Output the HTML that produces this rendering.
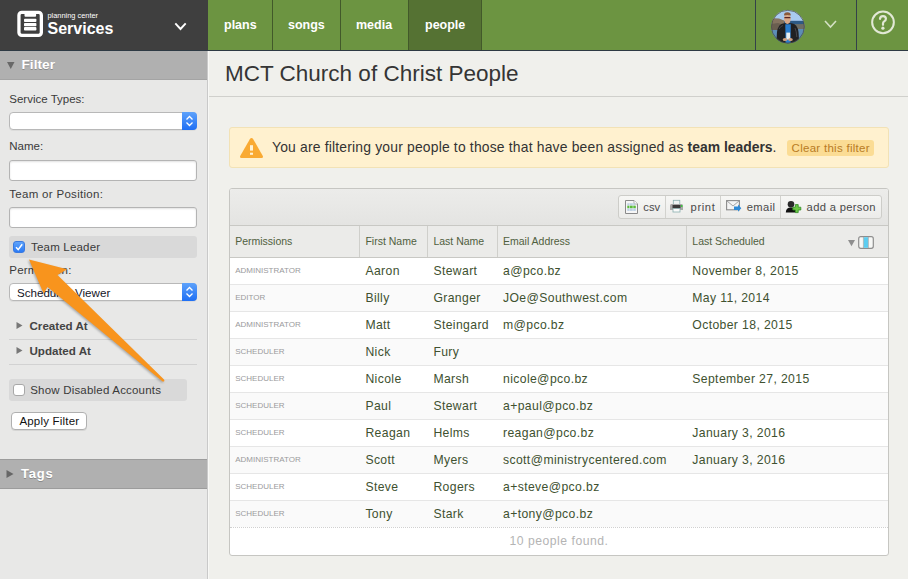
<!DOCTYPE html>
<html><head><meta charset="utf-8"><style>
*{margin:0;padding:0;box-sizing:border-box}
html,body{width:908px;height:579px;overflow:hidden;background:#f0f0ec;font-family:"Liberation Sans",sans-serif;position:relative}
.t{position:absolute;white-space:nowrap;line-height:1}
.b{position:absolute}
</style></head><body>
<div class="b" style="left:0;top:0;width:208px;height:50px;background:#3f3f3f"></div>
<div class="b" style="left:208px;top:0;width:700px;height:50px;background:#6c9441"></div>
<div class="b" style="left:0;top:50px;width:908px;height:1px;background:#2e3a44"></div>
<div class="b" style="left:409px;top:0;width:72px;height:50px;background:#557233"></div>
<div class="b" style="left:272px;top:0;width:1px;height:50px;background:#42592a"></div>
<div class="b" style="left:340px;top:0;width:1px;height:50px;background:#42592a"></div>
<div class="b" style="left:408px;top:0;width:1px;height:50px;background:#42592a"></div>
<div class="b" style="left:481px;top:0;width:1px;height:50px;background:#42592a"></div>
<div class="b" style="left:755px;top:0;width:1px;height:50px;background:#34414a"></div>
<div class="b" style="left:856px;top:0;width:1px;height:50px;background:#34414a"></div>
<div class="t" style="left:224px;top:19.42px;font-size:12.5px;color:#fff;font-weight:700;">plans</div>

<div class="t" style="left:288px;top:19.42px;font-size:12.5px;color:#fff;font-weight:700;">songs</div>

<div class="t" style="left:356px;top:19.42px;font-size:12.5px;color:#fff;font-weight:700;">media</div>

<div class="t" style="left:425px;top:19.42px;font-size:12.5px;color:#fff;font-weight:700;">people</div>

<svg class="b" style="left:14px;top:8px" width="32" height="32" viewBox="0 0 32 32">
<rect x="4.95" y="4.45" width="22.4" height="22.9" rx="2.8" fill="none" stroke="#fff" stroke-width="3.3"/>
<path d="M10.5 5 L22.1 5 L22.1 7.8 Q22.1 8.8 21.1 8.8 L11.5 8.8 Q10.5 8.8 10.5 7.8Z" fill="#fff"/>
<rect x="10" y="10.8" width="12.4" height="3.3" rx="0.8" fill="#fff"/>
<rect x="10" y="15" width="12.4" height="3.2" rx="0.8" fill="#fff"/>
<rect x="10" y="19.1" width="12.4" height="3.5" rx="0.8" fill="#fff"/>
</svg>
<div class="t" style="left:47.5px;top:12.03px;font-size:7.4px;color:#fff;font-weight:400;">planning center</div>

<div class="t" style="left:47.5px;top:20.65px;font-size:16px;color:#fff;font-weight:700;">Services</div>

<svg class="b" style="left:173px;top:21px" width="15" height="11" viewBox="0 0 15 11"><path d="M2.3 2.3 L7.5 8 L12.7 2.3" fill="none" stroke="#fff" stroke-width="1.9"/></svg>
<svg class="b" style="left:768px;top:7px" width="40" height="40" viewBox="0 0 40 40">
<defs><clipPath id="c"><circle cx="19.9" cy="19.7" r="16.6"/></clipPath></defs>
<g clip-path="url(#c)">
<rect width="40" height="40" fill="#a9cbf0"/>
<rect y="13.8" width="40" height="27" fill="#2d5a86"/>
<rect y="22" width="40" height="18" fill="#5d8db6"/>
<path d="M2 12.5 L6 11.2 L11 11.4 L16 13.5 L16 23 L2 23Z" fill="#85735f"/>
<path d="M2 17 L10 16 L16 18 L16 23 L2 23Z" fill="#6a5e50"/>
<path d="M23 17.3 L37 17 L37 22 L23 22Z" fill="#6e6e66"/>
<path d="M8 40 L9 25 Q10 17 16 16.2 L23.5 16.2 Q29.5 17 30.5 25 L31.5 40Z" fill="#202022"/>
<path d="M11 22 Q12.5 19 15 18.5 M27 21 Q28.5 24 28.8 30" fill="none" stroke="#4a4a4e" stroke-width="0.9"/>
<path d="M17.3 17.3 L22.8 17.3 L22.6 36 L17.5 36Z" fill="#2a7ccc"/>
<ellipse cx="19.4" cy="12" rx="3.3" ry="4.9" fill="#d9a888"/>
<path d="M16 8.6 Q15.9 5.3 19.4 5.3 Q22.9 5.3 22.8 8.6 Q19.4 7.2 16 8.6Z" fill="#8a5a3c"/>
<rect x="16.3" y="9.9" width="6.2" height="1.3" rx="0.5" fill="#5a2626"/>
<rect x="18.3" y="25.6" width="3.8" height="6.9" fill="#e8eef0"/>
<ellipse cx="17" cy="32.5" rx="2.3" ry="1.6" fill="#cfa080"/>
<ellipse cx="22.5" cy="32.5" rx="2.3" ry="1.6" fill="#cfa080"/>
</g>
<circle cx="19.9" cy="19.7" r="16.4" fill="none" stroke="#4a4a44" stroke-width="0.7"/>
</svg>
<svg class="b" style="left:824px;top:19px" width="13" height="10" viewBox="0 0 13 10"><path d="M1 2 L6.5 8 L12 2" fill="none" stroke="#d4e0c4" stroke-width="1.6"/></svg>
<svg class="b" style="left:868px;top:8px" width="30" height="30" viewBox="0 0 30 30"><circle cx="15" cy="14.35" r="10.85" fill="none" stroke="#e2e8d6" stroke-width="2"/><path d="M12 10.9 Q12.1 8.1 15 8.1 Q17.9 8.1 17.9 10.8 Q17.9 12.4 16.2 13.4 Q15 14.2 15 15.6 L 15 16.8" fill="none" stroke="#e2e8d6" stroke-width="2.2" stroke-linecap="round"/><circle cx="14.9" cy="20.2" r="1.6" fill="#e2e8d6"/></svg>
<div class="b" style="left:0;top:51px;width:207px;height:528px;background:#e8e8e7"></div>
<div class="b" style="left:207px;top:51px;width:1px;height:528px;background:#c9c9c9"></div>
<div class="b" style="left:208px;top:51px;width:1px;height:528px;background:#f8f8f6"></div>
<div class="b" style="left:0;top:51px;width:207px;height:29px;background:#b0b0b0;border-bottom:1px solid #a4a4a4"></div>
<svg class="b" style="left:6.8px;top:62px" width="8" height="8" viewBox="0 0 8 8"><path d="M0 0 L7.5 0 L3.75 7Z" fill="#686868"/></svg>
<div class="t" style="left:21.5px;top:57.60px;font-size:13.7px;color:#fff;font-weight:700;text-shadow:0 1px 0 #8a8a8a;">Filter</div>

<div class="t" style="left:9.3px;top:93.56px;font-size:11.5px;color:#3a3a3a;font-weight:400;">Service Types:</div>

<div class="b" style="left:9px;top:112px;width:188px;height:18px;background:#fff;border:1px solid #b8b8b8;border-radius:4px;box-shadow:0 1px 0 rgba(0,0,0,0.05)"></div><div class="b" style="left:182px;top:112px;width:15px;height:18px;background:linear-gradient(#5ea2fb,#1f6ff4);border-radius:0 4px 4px 0"></div><svg class="b" style="left:185px;top:115.0px" width="9" height="12" viewBox="0 0 9 12"><path d="M1.5 4.5 L4.5 1.5 L7.5 4.5 M1.5 7.5 L4.5 10.5 L7.5 7.5" fill="none" stroke="#fff" stroke-width="1.3"/></svg>
<div class="t" style="left:9.3px;top:141.26px;font-size:11.5px;color:#3a3a3a;font-weight:400;">Name:</div>

<div class="b" style="left:9px;top:160px;width:188px;height:21px;background:#fff;border:1px solid #b4b4b4;border-radius:3px;box-shadow:inset 0 1px 2px rgba(0,0,0,0.12)"></div>
<div class="t" style="left:9.3px;top:189.26px;font-size:11.5px;color:#3a3a3a;font-weight:400;letter-spacing:0.3px">Team or Position:</div>

<div class="b" style="left:9px;top:207px;width:188px;height:21px;background:#fff;border:1px solid #b4b4b4;border-radius:3px;box-shadow:inset 0 1px 2px rgba(0,0,0,0.12)"></div>
<div class="b" style="left:9px;top:236px;width:188px;height:22px;background:#d9d9d9;border-radius:3px"></div>
<div class="b" style="left:13px;top:241px;width:12px;height:12px;background:linear-gradient(#5fa3fa,#2a7af5);border-radius:3px;border:0.5px solid #3a7ae0"></div>
<svg class="b" style="left:13px;top:241px" width="12" height="12" viewBox="0 0 12 12"><path d="M3 6.3 L5.2 8.6 L9.2 3.2" fill="none" stroke="#fff" stroke-width="1.5"/></svg>
<div class="t" style="left:31px;top:241.66px;font-size:11.5px;color:#3a3a3a;font-weight:400;letter-spacing:0.2px">Team Leader</div>

<div class="t" style="left:9.3px;top:265.26px;font-size:11.5px;color:#3a3a3a;font-weight:400;letter-spacing:0.2px">Permission:</div>

<div class="b" style="left:9px;top:283px;width:188px;height:18px;background:#fff;border:1px solid #b8b8b8;border-radius:4px;box-shadow:0 1px 0 rgba(0,0,0,0.05)"></div><div class="b" style="left:182px;top:283px;width:15px;height:18px;background:linear-gradient(#5ea2fb,#1f6ff4);border-radius:0 4px 4px 0"></div><svg class="b" style="left:185px;top:286.0px" width="9" height="12" viewBox="0 0 9 12"><path d="M1.5 4.5 L4.5 1.5 L7.5 4.5 M1.5 7.5 L4.5 10.5 L7.5 7.5" fill="none" stroke="#fff" stroke-width="1.3"/></svg>
<div class="t" style="left:17px;top:286.58px;font-size:11.6px;color:#15151f;font-weight:400;">Scheduled Viewer</div>

<svg class="b" style="left:16px;top:322px" width="7" height="7" viewBox="0 0 7 7"><path d="M0.5 0 L6.5 3.5 L0.5 7Z" fill="#777"/></svg>
<div class="t" style="left:29.5px;top:320.38px;font-size:11.6px;color:#444;font-weight:700;">Created At</div>

<div class="b" style="left:9px;top:339px;width:188px;height:1px;background:#d2d2d2"></div>
<svg class="b" style="left:16px;top:347px" width="7" height="7" viewBox="0 0 7 7"><path d="M0.5 0 L6.5 3.5 L0.5 7Z" fill="#777"/></svg>
<div class="t" style="left:29.5px;top:345.18px;font-size:11.6px;color:#444;font-weight:700;">Updated At</div>

<div class="b" style="left:9px;top:364px;width:188px;height:1px;background:#d2d2d2"></div>
<div class="b" style="left:9px;top:379px;width:178px;height:22px;background:#d9d9d9;border-radius:3px"></div>
<div class="b" style="left:13px;top:384px;width:12px;height:12px;background:#fff;border:1px solid #a8a8a8;border-radius:3px"></div>
<div class="t" style="left:30.2px;top:384.66px;font-size:11.5px;color:#3a3a3a;font-weight:400;letter-spacing:0.2px">Show Disabled Accounts</div>

<div class="b" style="left:11px;top:412px;width:76px;height:18px;background:#fff;border:1px solid #b0b0b0;border-radius:4px;box-shadow:0 1px 0 rgba(0,0,0,0.08)"></div>
<div class="t" style="left:19.4px;top:416.26px;font-size:11.5px;color:#111;font-weight:400;letter-spacing:0.2px">Apply Filter</div>

<div class="b" style="left:0;top:459px;width:207px;height:30px;background:#b0b0b0;border-top:1px solid #9c9c9c;border-bottom:1px solid #9c9c9c"></div>
<svg class="b" style="left:5.5px;top:470px" width="8" height="8" viewBox="0 0 8 8"><path d="M0.5 0 L7.5 4 L0.5 8Z" fill="#666"/></svg>
<div class="t" style="left:21px;top:467.39px;font-size:13px;color:#fff;font-weight:700;text-shadow:0 1px 0 #8a8a8a;letter-spacing:0.8px">Tags</div>

<div class="t" style="left:225px;top:62.95px;font-size:22.5px;color:#353535;font-weight:400;">MCT Church of Christ People</div>

<div class="b" style="left:209px;top:96px;width:699px;height:1px;background:#d0d0cc"></div>
<div class="b" style="left:229px;top:127px;width:660px;height:41px;background:#fff1cf;border:1px solid #f2e2b6;border-radius:3px"></div>
<svg class="b" style="left:239px;top:137px" width="25" height="22" viewBox="0 0 25 22"><path d="M12.5 1 Q13.5 1 14.2 2.2 L23.8 19 Q24.5 20.9 22.6 20.9 L2.4 20.9 Q0.5 20.9 1.2 19 L10.8 2.2 Q11.5 1 12.5 1Z" fill="#f9aa33"/><rect x="11" y="8.2" width="3" height="5.4" fill="#fff3d6"/><rect x="11" y="15.7" width="3" height="2.1" fill="#fff3d6"/></svg>
<div class="t" style="left:272px;top:140.83px;font-size:13.9px;color:#333;font-weight:400;"><span style="letter-spacing:0.185px">You are filtering your people to those that have been assigned as </span><b>team leaders</b>.</div>

<div class="b" style="left:787px;top:140px;width:87px;height:16px;background:#fbdc94;border-radius:3px"></div>
<div class="t" style="left:791.6px;top:143.26px;font-size:11.5px;color:#b87b24;font-weight:400;letter-spacing:0.28px">Clear this filter</div>

<div class="b" style="left:229px;top:188px;width:660px;height:368px;background:#fff;border:1px solid #c6c6c2;border-radius:3px"></div>
<div class="b" style="left:230px;top:189px;width:658px;height:36px;background:linear-gradient(#ececea,#e4e4e2);border-radius:2px 2px 0 0"></div>
<div class="b" style="left:230px;top:225px;width:658px;height:1px;background:#c8c8c4"></div>
<div class="b" style="left:230px;top:226px;width:658px;height:31px;background:#ebebe9"></div>
<div class="b" style="left:230px;top:257px;width:658px;height:1px;background:#c8c8c4"></div>
<div class="b" style="left:359px;top:226px;width:1px;height:31px;background:#cfcfcb"></div>
<div class="b" style="left:427px;top:226px;width:1px;height:31px;background:#cfcfcb"></div>
<div class="b" style="left:497px;top:226px;width:1px;height:31px;background:#cfcfcb"></div>
<div class="b" style="left:686px;top:226px;width:1px;height:31px;background:#cfcfcb"></div>
<div class="t" style="left:235.2px;top:236.41px;font-size:10.5px;color:#506040;font-weight:400;">Permissions</div>

<div class="t" style="left:365.4px;top:236.41px;font-size:10.5px;color:#506040;font-weight:400;">First Name</div>

<div class="t" style="left:433.4px;top:236.41px;font-size:10.5px;color:#506040;font-weight:400;">Last Name</div>

<div class="t" style="left:503px;top:236.41px;font-size:10.5px;color:#506040;font-weight:400;">Email Address</div>

<div class="t" style="left:692.3px;top:236.41px;font-size:10.5px;color:#506040;font-weight:400;">Last Scheduled</div>

<svg class="b" style="left:848px;top:240px" width="7" height="7" viewBox="0 0 7 7"><path d="M0 0 L7 0 L3.5 6.2Z" fill="#8e8e8e"/></svg>
<svg class="b" style="left:858px;top:236px" width="16" height="13" viewBox="0 0 16 13"><rect x="0.7" y="0.7" width="14.6" height="11.6" rx="2" fill="#f7f8f6" stroke="#8e8e8e" stroke-width="1.2"/><rect x="5.6" y="1.2" width="4.6" height="10.6" fill="#5ccdf0"/><path d="M5.4 1 V12 M10.4 1 V12" stroke="#9a9a9a" stroke-width="0.6"/></svg>
<div class="b" style="left:618px;top:195px;width:264px;height:24px;background:linear-gradient(#f7f7f5,#ececea);border:1px solid #cdcdc9;border-radius:3px"></div>
<div class="b" style="left:665px;top:196px;width:1px;height:22px;background:#d2d2ce"></div>
<div class="b" style="left:720px;top:196px;width:1px;height:22px;background:#d2d2ce"></div>
<div class="b" style="left:780px;top:196px;width:1px;height:22px;background:#d2d2ce"></div>
<div class="t" style="left:643.2px;top:201.72px;font-size:11.2px;color:#4a4a4a;font-weight:400;letter-spacing:0.1px">csv</div>

<div class="t" style="left:690.6px;top:201.72px;font-size:11.2px;color:#4a4a4a;font-weight:400;letter-spacing:0.6px">print</div>

<div class="t" style="left:746.7px;top:201.72px;font-size:11.2px;color:#4a4a4a;font-weight:400;letter-spacing:0.4px">email</div>

<div class="t" style="left:806.6px;top:201.72px;font-size:11.2px;color:#4a4a4a;font-weight:400;letter-spacing:0.33px">add a person</div>

<svg class="b" style="left:624px;top:199px" width="15" height="16" viewBox="0 0 15 16">
<path d="M1.5 1.5 L10 1.5 L13.5 5 L13.5 14.5 L1.5 14.5Z" fill="#f6f6f6" stroke="#8a8a8a"/>
<path d="M10 1.5 L10 5 L13.5 5" fill="#fff" stroke="#9a9a9a" stroke-width="0.8"/>
<rect x="3.3" y="4.3" width="7.5" height="2.2" fill="#bcd0e4"/>
<rect x="3.3" y="6.7" width="8.5" height="2.6" fill="#5cbc3a"/>
<rect x="3.3" y="9.5" width="8.5" height="2.4" fill="#bcd0e4"/>
<path d="M5.5 4.3 V11.9 M9 4.3 V11.9" stroke="#e8eef4" stroke-width="0.6"/>
</svg>
<svg class="b" style="left:669px;top:199px" width="16" height="15" viewBox="0 0 16 15">
<rect x="4.3" y="1.3" width="6.5" height="4.5" fill="#eef4f4" stroke="#8ab0b0" stroke-width="0.8"/>
<path d="M1 6.5 Q1 5 2.5 5 L12.5 5 Q14 5 14 6.5 L14 11 L1 11Z" fill="#a8a8a8"/>
<rect x="3.5" y="6" width="8" height="3.4" fill="#3a3a3a"/>
<rect x="4" y="9.6" width="7" height="3.4" fill="#fafafa" stroke="#8ab0b0" stroke-width="0.8"/>
<circle cx="12.7" cy="7" r="0.9" fill="#3c3"/>
</svg>
<svg class="b" style="left:725px;top:199px" width="18" height="14" viewBox="0 0 18 14">
<rect x="1.6" y="1.6" width="12.8" height="9.2" fill="#f4f4f4" stroke="#8a8a8a" stroke-width="1.1"/>
<path d="M1.8 1.8 L8 7 L14.2 1.8" fill="none" stroke="#9a9a9a" stroke-width="0.9"/>
<path d="M9 7.5 L13 7.5 L13 5.6 L16.3 9.2 L13 12.8 L13 10.9 L9 10.9Z" fill="#2f8ad6"/>
</svg>
<svg class="b" style="left:785px;top:200px" width="17" height="14" viewBox="0 0 17 14">
<circle cx="6" cy="4.3" r="3.3" fill="#2a2a2a"/>
<path d="M0.8 12.5 Q1 7.6 5.8 7.6 Q10.6 7.6 10.8 12.5Z" fill="#111"/>
<path d="M10.4 4.6 h2.8 v2.6 h2.6 v2.8 h-2.6 v2.6 h-2.8 v-2.6 h-2.6 v-2.8 h2.6Z" fill="#6cc844" stroke="#2f8a22" stroke-width="0.8" stroke-linejoin="round"/>
</svg>
<div class="b" style="left:230px;top:258px;width:658px;height:26px;background:#ffffff"></div>
<div class="b" style="left:230px;top:284px;width:658px;height:1px;background:#e6e6e6"></div>
<div class="t" style="left:235.2px;top:267.33px;font-size:8px;color:#9a9a9c;font-weight:400;">ADMINISTRATOR</div>

<div class="t" style="left:365.4px;top:264.57px;font-size:12.2px;color:#405130;font-weight:400;letter-spacing:0.38px">Aaron</div>

<div class="t" style="left:433.4px;top:264.57px;font-size:12.2px;color:#405130;font-weight:400;letter-spacing:0.38px">Stewart</div>

<div class="t" style="left:503px;top:264.57px;font-size:12.2px;color:#405130;font-weight:400;letter-spacing:0.38px">a@pco.bz</div>

<div class="t" style="left:692.3px;top:264.57px;font-size:12.2px;color:#405130;font-weight:400;letter-spacing:0.38px">November 8, 2015</div>

<div class="b" style="left:230px;top:285px;width:658px;height:26px;background:#fafafa"></div>
<div class="b" style="left:230px;top:311px;width:658px;height:1px;background:#e6e6e6"></div>
<div class="t" style="left:235.2px;top:294.33px;font-size:8px;color:#9a9a9c;font-weight:400;">EDITOR</div>

<div class="t" style="left:365.4px;top:291.57px;font-size:12.2px;color:#405130;font-weight:400;letter-spacing:0.38px">Billy</div>

<div class="t" style="left:433.4px;top:291.57px;font-size:12.2px;color:#405130;font-weight:400;letter-spacing:0.38px">Granger</div>

<div class="t" style="left:503px;top:291.57px;font-size:12.2px;color:#405130;font-weight:400;letter-spacing:0.38px">JOe@Southwest.com</div>

<div class="t" style="left:692.3px;top:291.57px;font-size:12.2px;color:#405130;font-weight:400;letter-spacing:0.38px">May 11, 2014</div>

<div class="b" style="left:230px;top:312px;width:658px;height:26px;background:#ffffff"></div>
<div class="b" style="left:230px;top:338px;width:658px;height:1px;background:#e6e6e6"></div>
<div class="t" style="left:235.2px;top:321.33px;font-size:8px;color:#9a9a9c;font-weight:400;">ADMINISTRATOR</div>

<div class="t" style="left:365.4px;top:318.57px;font-size:12.2px;color:#405130;font-weight:400;letter-spacing:0.38px">Matt</div>

<div class="t" style="left:433.4px;top:318.57px;font-size:12.2px;color:#405130;font-weight:400;letter-spacing:0.38px">Steingard</div>

<div class="t" style="left:503px;top:318.57px;font-size:12.2px;color:#405130;font-weight:400;letter-spacing:0.38px">m@pco.bz</div>

<div class="t" style="left:692.3px;top:318.57px;font-size:12.2px;color:#405130;font-weight:400;letter-spacing:0.38px">October 18, 2015</div>

<div class="b" style="left:230px;top:339px;width:658px;height:26px;background:#fafafa"></div>
<div class="b" style="left:230px;top:365px;width:658px;height:1px;background:#e6e6e6"></div>
<div class="t" style="left:235.2px;top:348.33px;font-size:8px;color:#9a9a9c;font-weight:400;">SCHEDULER</div>

<div class="t" style="left:365.4px;top:345.57px;font-size:12.2px;color:#405130;font-weight:400;letter-spacing:0.38px">Nick</div>

<div class="t" style="left:433.4px;top:345.57px;font-size:12.2px;color:#405130;font-weight:400;letter-spacing:0.38px">Fury</div>

<div class="b" style="left:230px;top:366px;width:658px;height:26px;background:#ffffff"></div>
<div class="b" style="left:230px;top:392px;width:658px;height:1px;background:#e6e6e6"></div>
<div class="t" style="left:235.2px;top:375.33px;font-size:8px;color:#9a9a9c;font-weight:400;">SCHEDULER</div>

<div class="t" style="left:365.4px;top:372.57px;font-size:12.2px;color:#405130;font-weight:400;letter-spacing:0.38px">Nicole</div>

<div class="t" style="left:433.4px;top:372.57px;font-size:12.2px;color:#405130;font-weight:400;letter-spacing:0.38px">Marsh</div>

<div class="t" style="left:503px;top:372.57px;font-size:12.2px;color:#405130;font-weight:400;letter-spacing:0.38px">nicole@pco.bz</div>

<div class="t" style="left:692.3px;top:372.57px;font-size:12.2px;color:#405130;font-weight:400;letter-spacing:0.38px">September 27, 2015</div>

<div class="b" style="left:230px;top:393px;width:658px;height:26px;background:#fafafa"></div>
<div class="b" style="left:230px;top:419px;width:658px;height:1px;background:#e6e6e6"></div>
<div class="t" style="left:235.2px;top:402.33px;font-size:8px;color:#9a9a9c;font-weight:400;">SCHEDULER</div>

<div class="t" style="left:365.4px;top:399.57px;font-size:12.2px;color:#405130;font-weight:400;letter-spacing:0.38px">Paul</div>

<div class="t" style="left:433.4px;top:399.57px;font-size:12.2px;color:#405130;font-weight:400;letter-spacing:0.38px">Stewart</div>

<div class="t" style="left:503px;top:399.57px;font-size:12.2px;color:#405130;font-weight:400;letter-spacing:0.38px">a+paul@pco.bz</div>

<div class="b" style="left:230px;top:420px;width:658px;height:26px;background:#ffffff"></div>
<div class="b" style="left:230px;top:446px;width:658px;height:1px;background:#e6e6e6"></div>
<div class="t" style="left:235.2px;top:429.33px;font-size:8px;color:#9a9a9c;font-weight:400;">SCHEDULER</div>

<div class="t" style="left:365.4px;top:426.57px;font-size:12.2px;color:#405130;font-weight:400;letter-spacing:0.38px">Reagan</div>

<div class="t" style="left:433.4px;top:426.57px;font-size:12.2px;color:#405130;font-weight:400;letter-spacing:0.38px">Helms</div>

<div class="t" style="left:503px;top:426.57px;font-size:12.2px;color:#405130;font-weight:400;letter-spacing:0.38px">reagan@pco.bz</div>

<div class="t" style="left:692.3px;top:426.57px;font-size:12.2px;color:#405130;font-weight:400;letter-spacing:0.38px">January 3, 2016</div>

<div class="b" style="left:230px;top:447px;width:658px;height:26px;background:#fafafa"></div>
<div class="b" style="left:230px;top:473px;width:658px;height:1px;background:#e6e6e6"></div>
<div class="t" style="left:235.2px;top:456.33px;font-size:8px;color:#9a9a9c;font-weight:400;">ADMINISTRATOR</div>

<div class="t" style="left:365.4px;top:453.57px;font-size:12.2px;color:#405130;font-weight:400;letter-spacing:0.38px">Scott</div>

<div class="t" style="left:433.4px;top:453.57px;font-size:12.2px;color:#405130;font-weight:400;letter-spacing:0.38px">Myers</div>

<div class="t" style="left:503px;top:453.57px;font-size:12.2px;color:#405130;font-weight:400;letter-spacing:0.38px">scott@ministrycentered.com</div>

<div class="t" style="left:692.3px;top:453.57px;font-size:12.2px;color:#405130;font-weight:400;letter-spacing:0.38px">January 3, 2016</div>

<div class="b" style="left:230px;top:474px;width:658px;height:26px;background:#ffffff"></div>
<div class="b" style="left:230px;top:500px;width:658px;height:1px;background:#e6e6e6"></div>
<div class="t" style="left:235.2px;top:483.33px;font-size:8px;color:#9a9a9c;font-weight:400;">SCHEDULER</div>

<div class="t" style="left:365.4px;top:480.57px;font-size:12.2px;color:#405130;font-weight:400;letter-spacing:0.38px">Steve</div>

<div class="t" style="left:433.4px;top:480.57px;font-size:12.2px;color:#405130;font-weight:400;letter-spacing:0.38px">Rogers</div>

<div class="t" style="left:503px;top:480.57px;font-size:12.2px;color:#405130;font-weight:400;letter-spacing:0.38px">a+steve@pco.bz</div>

<div class="b" style="left:230px;top:501px;width:658px;height:26px;background:#fafafa"></div>
<div class="b" style="left:230px;top:527px;width:658px;height:1px;border-top:1px dotted #d0d0d0"></div>
<div class="t" style="left:235.2px;top:510.33px;font-size:8px;color:#9a9a9c;font-weight:400;">SCHEDULER</div>

<div class="t" style="left:365.4px;top:507.57px;font-size:12.2px;color:#405130;font-weight:400;letter-spacing:0.38px">Tony</div>

<div class="t" style="left:433.4px;top:507.57px;font-size:12.2px;color:#405130;font-weight:400;letter-spacing:0.38px">Stark</div>

<div class="t" style="left:503px;top:507.57px;font-size:12.2px;color:#405130;font-weight:400;letter-spacing:0.38px">a+tony@pco.bz</div>

<div class="t" style="left:509.4px;top:534.67px;font-size:12.2px;color:#b4b4b4;font-weight:400;letter-spacing:0.52px">10 people found.</div>

<svg class="b" style="left:0;top:0;filter:drop-shadow(-0.5px 1px 1px rgba(0,0,0,0.28))" width="908" height="579" viewBox="0 0 908 579"><path d="M29 259.5 L67.2 269.3 L57.5 275 L164 379.6 Q165.2 381.8 162.6 381.6 L47.5 287 L43.7 293.8 Z" fill="#f8941d"/></svg>
</body></html>
